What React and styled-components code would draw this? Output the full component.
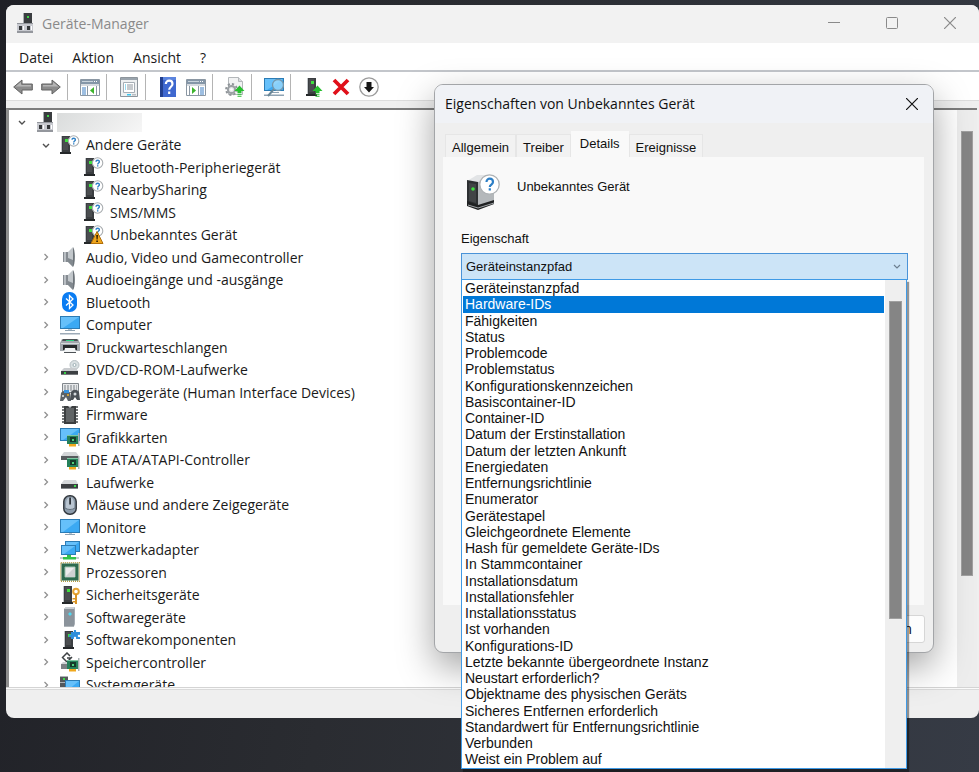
import React, { useState } from "react";
import styled, { createGlobalStyle } from "styled-components";

const properties = [
  "Geräteinstanzpfad",
  "Hardware-IDs",
  "Fähigkeiten",
  "Status",
  "Problemcode",
  "Problemstatus",
  "Konfigurationskennzeichen",
  "Basiscontainer-ID",
  "Container-ID",
  "Datum der Erstinstallation",
  "Datum der letzten Ankunft",
  "Energiedaten",
  "Entfernungsrichtlinie",
  "Enumerator",
  "Gerätestapel",
  "Gleichgeordnete Elemente",
  "Hash für gemeldete Geräte-IDs",
  "In Stammcontainer",
  "Installationsdatum",
  "Installationsfehler",
  "Installationsstatus",
  "Ist vorhanden",
  "Konfigurations-ID",
  "Letzte bekannte übergeordnete Instanz",
  "Neustart erforderlich?",
  "Objektname des physischen Geräts",
  "Sicheres Entfernen erforderlich",
  "Standardwert für Entfernungsrichtlinie",
  "Verbunden",
  "Weist ein Problem auf",
];

const devices = [
  { level: 2, icon: "unknown", open: true, name: "Andere Geräte" },
  { level: 3, icon: "unknown", name: "Bluetooth-Peripheriegerät" },
  { level: 3, icon: "unknown", name: "NearbySharing" },
  { level: 3, icon: "unknown", name: "SMS/MMS" },
  { level: 3, icon: "warning", name: "Unbekanntes Gerät" },
  { level: 2, icon: "speaker", name: "Audio, Video und Gamecontroller" },
  { level: 2, icon: "speaker", name: "Audioeingänge und -ausgänge" },
  { level: 2, icon: "bluetooth", name: "Bluetooth" },
  { level: 2, icon: "computer", name: "Computer" },
  { level: 2, icon: "printer", name: "Druckwarteschlangen" },
  { level: 2, icon: "dvd", name: "DVD/CD-ROM-Laufwerke" },
  { level: 2, icon: "hid", name: "Eingabegeräte (Human Interface Devices)" },
  { level: 2, icon: "firmware", name: "Firmware" },
  { level: 2, icon: "graphics", name: "Grafikkarten" },
  { level: 2, icon: "ide", name: "IDE ATA/ATAPI-Controller" },
  { level: 2, icon: "drive", name: "Laufwerke" },
  { level: 2, icon: "mouse", name: "Mäuse und andere Zeigegeräte" },
  { level: 2, icon: "monitor", name: "Monitore" },
  { level: 2, icon: "network", name: "Netzwerkadapter" },
  { level: 2, icon: "cpu", name: "Prozessoren" },
  { level: 2, icon: "security", name: "Sicherheitsgeräte" },
  { level: 2, icon: "software", name: "Softwaregeräte" },
  { level: 2, icon: "component", name: "Softwarekomponenten" },
  { level: 2, icon: "storage", name: "Speichercontroller" },
  { level: 2, icon: "system", name: "Systemgeräte" },
];

/* shared pieces of the icons */

const Tower = ({ x = 1 }) => (
  <g transform={`translate(${x} 0)`}>
    <path d="M0 1h2v16H0z" fill="#c3c7ca" />
    <path d="M1 1h8v16H1z" fill="#3b3e41" />
    <path d="M2 2h5v13H2z" fill="#4a4d50" />
    <path d="M-1 17h11v2H-1z" fill="#25282a" />
    <path d="M4 4h3v3H4z" fill="#3fe03f" />
  </g>
);

const Question = () => (
  <g>
    <circle cx="13.6" cy="6" r="5.2" fill="#fff" stroke="#a9adb0" strokeWidth="1.1" />
    <path
      d="M12 4.7c0-2 3.400-2 3.400 0 0 1.300-1.700 1.300-1.700 2.700M13.700 8.300v1.100"
      fill="none"
      stroke="#2d7fc6"
      strokeWidth="1.4"
    />
  </g>
);

const Screen = ({ x = 0, y = 0, w = 20, h = 13 }) => (
  <g>
    <rect x={x} y={y} width={w} height={h} fill="#2c7cb5" />
    <rect x={x + 1} y={y + 1} width={w - 2} height={h - 2} fill="#3ba9f3" />
    <path d={`M${x + 1} ${y + 1}h${w - 2}L${x + 3} ${y + h - 1}h-2z`} fill="#66c0fa" />
  </g>
);

const Board = () => (
  <g>
    <path d="M7 8h11v9H7z" fill="#25805a" />
    <path d="M7 8h11v1H7z" fill="#7fc6a2" />
    <path d="M10 10h6v5h-6z" fill="#17392c" />
    <path d="M12 12h2v2h-2z" fill="#4fcf7c" />
    <path d="M18 6h1.500v13H18z" fill="#aab2b5" />
    <path d="M9 17h7v2.500H9z" fill="#f0a81d" />
  </g>
);

const UpArrow = () => (
  <g fill="#27bf2f">
    <path d="M14.500 8.500 19.500 14h-3v2h-4v-2h-3z" />
    <path d="M12.500 16.800h4v1h-4zM12.500 18.700h4v1h-4z" />
  </g>
);

const WindowFrame = ({ children }) => (
  <g>
    <path d="M.5 2.500h19v16H.5z" fill="#fff" stroke="#8b97a3" />
    <path d="M1 3h18v4H1z" fill="#8496a8" />
    <path d="M2 4h11v1H2z" fill="#c8d3dc" />
    <path d="M14 4h1v1h-1zM16 4h1v1h-1z" fill="#fff" />
    <path d="M1 7h18v2H1z" fill="#d5dadf" />
    {children}
  </g>
);

const icons = {
  root: (
    <g>
      <path d="M8 0h8v10H8z" fill="#3a3d40" />
      <path d="M7 0h1v10H7z" fill="#a8acb0" />
      <path d="M11 3h2v2h-2z" fill="#3fd447" />
      <path d="M1 10h16v10H1z" fill="#c7c9cf" />
      <path d="M1 10h16v1H1zM1 18h16v2H1z" fill="#94979d" />
      <path d="M3 13h3v4H3zM11 13h3v4h-3z" fill="#34373a" />
      <path d="M7 13h1v4H7zM15 13h1v4h-1z" fill="#fff" />
    </g>
  ),
  unknown: (
    <g>
      <Tower />
      <Question />
    </g>
  ),
  warning: (
    <g>
      <Tower />
      <Question />
      <path d="M13 6.500 19 18.500H7z" fill="#efa51c" stroke="#b06f0b" />
      <path d="M12.200 10h1.800l-.4 4.500h-1zM12.300 15.500h1.600V17h-1.600z" fill="#2c1c00" />
    </g>
  ),
  speaker: (
    <g>
      <path d="M3 5h5v10H3z" fill="#858b91" />
      <path d="M4 5h2v10H4z" fill="#b9bec3" />
      <path d="M8 5 13 0v20l-5-5z" fill="#c2c7cb" />
      <path d="M8 11 13 13v7l-5-5z" fill="#82898f" />
      <path d="M13 0c2.500 3 2.500 17 0 20z" fill="#6d747a" />
    </g>
  ),
  bluetooth: (
    <g>
      <rect x="2" y="0" width="15" height="20" rx="7" fill="#0a7cf2" />
      <path d="m6 6.500 7 6.500-3.500 3.500v-13L13 7l-7 6.500" fill="none" stroke="#fff" strokeWidth="1.300" />
    </g>
  ),
  computer: (
    <g>
      <Screen y={1} />
      <path d="M8 14h4v1H8z" fill="#b9c6d0" />
      <path d="M5 15h10v1H5z" fill="#8fa3b3" />
      <path d="M0 18h20v1.500H0z" fill="#9dabb8" />
    </g>
  ),
  monitor: (
    <g>
      <Screen y={2} h={14} />
      <path d="M9 16h3v1H9z" fill="#b9c6d0" />
      <path d="M5 17h10v1H5z" fill="#8fa3b3" />
    </g>
  ),
  printer: (
    <g>
      <path d="M2 2h16l2 4v8H0V6z" fill="#a1a7ac" />
      <path d="M3 2h14l1 2H2z" fill="#4d5256" />
      <path d="M6 3h8v1H6z" fill="#2bd07f" />
      <path d="M1 6h18v1H1z" fill="#d5d9dc" />
      <path d="M3 8h14v5H3z" fill="#26292b" />
      <path d="M5 11h10l1 4H4z" fill="#f2f4f5" />
      <path d="M4 15h12v1H4z" fill="#4d5256" />
    </g>
  ),
  dvd: (
    <g>
      <circle cx="14.500" cy="5" r="4.500" fill="#d9e0e2" stroke="#b7c0c4" />
      <circle cx="14.500" cy="5" r="1.500" fill="#fff" stroke="#9fb0b5" />
      <path d="M4 8h12l2 3H1z" fill="#c9cccf" />
      <path d="M1 11h17v4H1z" fill="#3c3f42" />
      <path d="M4 12h2v2H4z" fill="#38cf49" />
      <path d="M1 14h17v1H1z" fill="#75797c" />
    </g>
  ),
  hid: (
    <g>
      <path d="M2.500 1.500h16v9h-16z" fill="#e6e8ea" stroke="#81878c" />
      <path d="M4 4h13M4 6h13M4 8h13" stroke="#7b8186" strokeDasharray="2 1" />
      <path d="M1 11c2-3 7-3 9 0l1 8H8l-2-4-3 4H0z" fill="#5b6268" />
      <path d="M11 10c2-3 6-3 8 0l1 8h-3l-2-3-2 3h-3z" fill="#4a5056" />
      <path d="M4 8h5v3H4z" fill="#3793e0" />
      <circle cx="8" cy="13" r="1" fill="#f0b429" />
      <circle cx="3" cy="14" r="1" fill="#e8ecef" />
      <circle cx="15" cy="12" r="1.500" fill="#d5dade" />
    </g>
  ),
  firmware: (
    <g>
      <path d="M2 2h16M2 5h16M2 8h16M2 11h16M2 14h16M2 17h16" stroke="#44494c" strokeWidth="1.600" />
      <path d="M4 1h12v18H4z" fill="#3b3e40" />
      <path d="M6 3h8v14H6z" fill="#606466" />
      <path d="M8 1h4l-2 2z" fill="#cfd2d4" />
    </g>
  ),
  graphics: (
    <g>
      <Screen y={1} />
      <Board />
    </g>
  ),
  ide: (
    <g>
      <path d="M4 2h12l3 4H1z" fill="#d2d5d7" />
      <path d="M1 6h18v4H1z" fill="#575b5e" />
      <Board />
    </g>
  ),
  drive: (
    <g>
      <path d="M4 8h12l2 4H1z" fill="#d5d8da" />
      <path d="M1 12h17v5H1z" fill="#3c3f42" />
      <path d="M14 13h2v2h-2z" fill="#3bdc49" />
      <path d="M1 16h17v1H1z" fill="#85898c" />
    </g>
  ),
  mouse: (
    <g>
      <rect x="3.800" y=".8" width="12.400" height="18.400" rx="5.800" fill="#8d9cab" stroke="#33383e" strokeWidth="1.500" />
      <path d="M6 9c0-9 8-9 8 0v4c-2 2-6 2-8 0z" fill="#b9c5d1" />
      <path d="M9.200 2.500h1.800v7H9.200z" fill="#30363d" />
      <path d="M5 13c3 2 7 2 10 0" fill="none" stroke="#65717c" />
    </g>
  ),
  network: (
    <g>
      <Screen x={5} y={1} w={15} h={11} />
      <Screen x={1} y={5} w={15} h={10} />
      <path d="M7 15h4v2h5v2.500H3V17h4z" fill="#32c24b" />
      <path d="M0 17h3v2H0zM16 17h3v2h-3z" fill="#c6ccd0" />
    </g>
  ),
  cpu: (
    <g>
      <path d="M.8.8h18.400v18.400H.8z" fill="none" stroke="#b49b45" strokeWidth="1.500" strokeDasharray="1 1" />
      <path d="M1.500 1.500h17v17h-17z" fill="#2d6b4e" />
      <path d="M5 5h10v10H5z" fill="#ececec" stroke="#9ec2ae" />
      <path d="M15 5v10H5z" fill="#cfd2d2" />
    </g>
  ),
  security: (
    <g>
      <Tower x={3} />
      <circle cx="16" cy="6.500" r="2.800" fill="none" stroke="#e5a435" strokeWidth="2" />
      <path d="M15 9h2v10h-2zM12.500 13H15v1.500h-2.500zM12.500 16H15v1.500h-2.500z" fill="#d99425" />
    </g>
  ),
  software: (
    <g>
      <path d="M4 2 6 0h9v17l-1 2.500H4z" fill="#a4abb2" />
      <path d="M4 2h10v17.500H4z" fill="#8b939b" />
      <path d="M4 2 6 0h9l-1 2z" fill="#c8cdd2" />
      <path d="M10 5 12 7l-2 2-2-2z" fill="#4fd8f2" />
    </g>
  ),
  component: (
    <g>
      <Tower x={4} />
      <path d="M11 2h3c-1-3 3-3 2 0h4v3c-3-1-3 3 0 2v2h-4c1-3-3-3-2 0h-3V7c-3 1-3-3 0-2z" fill="#2d8edb" />
    </g>
  ),
  storage: (
    <g>
      <path d="m2 6 5-5 3 3M3 6l4 4 5-5M7 6h4" fill="none" stroke="#3d4144" strokeWidth="1.500" />
      <path d="M1 12h9v5H1z" fill="#7c8184" />
      <path d="M3 10h8l-2 2H1z" fill="#cfd3d5" />
      <Board />
    </g>
  ),
  system: (
    <g>
      <path d="M0 1h8v17H0z" fill="#54585b" />
      <path d="M0 1h8v1H0zM0 7h6v1H0z" fill="#aeb3b6" />
      <path d="M3 3h2v2H3z" fill="#3fdc49" />
      <Screen x={5} y={5} w={15} h={11} />
    </g>
  ),
  back: (
    <g>
      <path
        d="M.7 10 9 3v4h10.300v6H9v4z"
        fill="#8c8c8c"
        stroke="#626262"
        strokeLinejoin="round"
      />
      <path d="M2.500 9.500 8 5v3h10v1.500z" fill="#b5b5b5" />
    </g>
  ),
  forward: (
    <g>
      <path
        d="M19.300 10 11 3v4H.7v6H11v4z"
        fill="#8c8c8c"
        stroke="#626262"
        strokeLinejoin="round"
      />
      <path d="M17.500 9.500 12 5v3H2v1.500z" fill="#b5b5b5" />
    </g>
  ),
  showTree: (
    <WindowFrame>
      <path d="M2 11h4M2 13h4M2 15h4M2 17h4" stroke="#3c7fc4" />
      <path d="M7.500 9v9M16.500 9v9" stroke="#8b97a3" />
      <path d="M14 10v7l-4-3.500z" fill="#3cb42c" />
    </WindowFrame>
  ),
  properties: (
    <g>
      <path d="M1.500.5h17v19h-17z" fill="#eef0f1" stroke="#8d959c" />
      <path d="M2 1h16v2H2z" fill="#9aa4ad" />
      <path d="M4.500 5.500h11v10h-11z" fill="#fff" stroke="#a6aeb5" />
      <path d="M6 8h1M6 10h1M6 12h1" stroke="#35b8e0" />
      <path d="M8 8h6M8 10h6M8 12h6" stroke="#8d959c" />
      <path d="M8 17h4v1.500H8z" fill="#3bc4ee" />
      <path d="M13 17h4v1.500h-4z" fill="#b8bec4" />
    </g>
  ),
  help: (
    <g>
      <path d="M2 0h16v20H2z" fill="#3f68cf" />
      <path d="M2 0h3v20H2z" fill="#23408f" />
      <path d="M5 0h13v3H5z" fill="#5b84de" />
      <path d="M7.800 7c0-4.500 6.700-4.500 6.700 0 0 2.700-3.300 2.800-3.300 5.800M11.200 14.500V17" fill="none" stroke="#fff" strokeWidth="2.200" />
    </g>
  ),
  action: (
    <WindowFrame>
      <path d="M14 11h4M14 13h4M14 15h4M14 17h4" stroke="#3c7fc4" />
      <path d="M12.500 9v9M3.500 9v9" stroke="#8b97a3" />
      <path d="M6 10v7l4-3.500z" fill="#3cb42c" />
    </WindowFrame>
  ),
  update: (
    <g>
      <path d="M3.500.5h10l4 4v13h-14z" fill="#f1f2f3" stroke="#b3b7ba" />
      <path d="M13.500.5v4h4" fill="#dadddf" stroke="#b3b7ba" />
      <circle cx="6.500" cy="12.500" r="5.400" fill="none" stroke="#8f9498" strokeWidth="2" strokeDasharray="2.200 2" />
      <circle cx="6.500" cy="12.500" r="3.600" fill="#e1e3e5" stroke="#9a9fa3" strokeWidth="2" />
      <circle cx="6.500" cy="12.500" r="1.300" fill="#fff" />
      <UpArrow />
    </g>
  ),
  scan: (
    <g>
      <Screen y={1} />
      <path d="M6 15h9v1H6zM0 17.500h20V19H0z" fill="#8fa3b3" />
      <path d="m10 12-6 7" stroke="#6b8797" strokeWidth="2" />
      <circle cx="14" cy="8" r="5.500" fill="#9bd8fb" fillOpacity=".8" stroke="#7496aa" strokeWidth="1.300" />
    </g>
  ),
  enable: (
    <g>
      <Tower x={4} />
      <UpArrow />
    </g>
  ),
  remove: <path d="m3 3 14 14M17 3 3 17" stroke="#e0101a" strokeWidth="3.800" />,
  disable: (
    <g>
      <circle cx="10" cy="10" r="9.200" fill="#fdfdfd" stroke="#9b9b9b" strokeWidth="1.300" />
      <path d="M7.500 5h5v5H15l-5 5.500L5 10h2.500z" fill="#151515" />
    </g>
  ),
  chevronDown: <path d="m7 9 3 3 3-3" fill="none" stroke="#505050" strokeWidth="1.400" />,
  chevronRight: <path d="m8.500 7 3 3-3 3" fill="none" stroke="#909090" strokeWidth="1.300" />,
};

const Icon = ({ name }) => (
  <svg width="20" height="20" viewBox="0 0 20 20" aria-hidden="true">
    {icons[name]}
  </svg>
);

const toolGroups = [
  [["back", "Zurück"], ["forward", "Vorwärts"]],
  [["showTree", "Konsolenstruktur"]],
  [["properties", "Eigenschaften"]],
  [["help", "Hilfe"], ["action", "Aktionsbereich"]],
  [["update", "Treiber aktualisieren"]],
  [["scan", "Nach geänderter Hardware suchen"]],
  [["enable", "Gerät aktivieren"], ["remove", "Gerät deinstallieren"], ["disable", "Gerät deaktivieren"]],
];

const CloseGlyph = () => (
  <svg width="12" height="12" viewBox="0 0 12 12" aria-hidden="true">
    <path d="M0 0l12 12M12 0L0 12" stroke="currentColor" strokeWidth="1.200" />
  </svg>
);

function DeviceManager() {
  return (
    <MainWindow>
      <TitleBar>
        <Icon name="root" />
        <h1>Geräte-Manager</h1>
        <CaptionButton aria-label="Minimieren">
          <svg width="12" height="12" viewBox="0 0 12 12">
            <path d="M0 5.500h12" stroke="currentColor" />
          </svg>
        </CaptionButton>
        <CaptionButton aria-label="Maximieren">
          <svg width="12" height="12" viewBox="0 0 12 12">
            <rect x=".5" y=".5" width="11" height="11" rx="1" fill="none" stroke="currentColor" />
          </svg>
        </CaptionButton>
        <CaptionButton aria-label="Schließen">
          <CloseGlyph />
        </CaptionButton>
      </TitleBar>
      <MenuBar>
        {["Datei", "Aktion", "Ansicht", "?"].map((item) => (
          <button key={item}>{item}</button>
        ))}
      </MenuBar>
      <ToolBar>
        {toolGroups.map((group) => (
          <ToolGroup key={group[0][0]}>
            {group.map(([icon, label]) => (
              <button key={icon} aria-label={label}>
                <Icon name={icon} />
              </button>
            ))}
          </ToolGroup>
        ))}
      </ToolBar>
      <Pane>
        <Tree role="tree">
          <TreeItem role="treeitem" $level={1}>
            <Twisty>
              <Icon name="chevronDown" />
            </Twisty>
            <Icon name="root" />
            <HostName />
          </TreeItem>
          {devices.map((item) => (
            <TreeItem key={item.name} role="treeitem" aria-level={item.level} $level={item.level}>
              <Twisty>
                {item.level === 2 && <Icon name={item.open ? "chevronDown" : "chevronRight"} />}
              </Twisty>
              <Icon name={item.icon} />
              <span>{item.name}</span>
            </TreeItem>
          ))}
        </Tree>
        <PaneScroll>
          <Thumb $size="80%" />
        </PaneScroll>
      </Pane>
      <StatusBar />
    </MainWindow>
  );
}

function PropertiesDialog() {
  const [value, setValue] = useState(properties[0]);
  const [active, setActive] = useState(properties[1]);

  return (
    <Dialog role="dialog" aria-labelledby="dialogTitle">
      <DialogTitle>
        <h2 id="dialogTitle">Eigenschaften von Unbekanntes Gerät</h2>
        <DialogClose aria-label="Schließen">
          <CloseGlyph />
        </DialogClose>
      </DialogTitle>
      <Tabs role="tablist">
        {["Allgemein", "Treiber", "Details", "Ereignisse"].map((tab) => (
          <Tab key={tab} role="tab" aria-selected={tab === "Details"} $active={tab === "Details"}>
            {tab}
          </Tab>
        ))}
      </Tabs>
      <Page role="tabpanel">
        <DeviceHead>
          <svg width="36" height="38" viewBox="0 0 36 38" aria-hidden="true">
            <path d="M2 8 12 2h17v24l-16 6z" fill="#e2e4e6" />
            <path d="M13 9 29 6v23l-16 5z" fill="#b4b8bb" />
            <path d="M2 7l11 2v24L2 30z" fill="#2d3032" />
            <path d="M4 10l7 1v19l-7-2z" fill="#414446" />
            <path d="M2 28l11 4 16-5v4l-16 6-11-4z" fill="#1f2122" />
            <path d="M3 32l10 3 16-5" fill="none" stroke="#a1a5a8" />
            <circle cx="8" cy="16" r="1.800" fill="#3fe03f" />
            <circle cx="24.500" cy="11.500" r="9.700" fill="#fff" stroke="#adb1b4" strokeWidth="1.300" />
            <path
              d="M21.500 9c0-4.500 6.500-4.300 6.500 0 0 2.600-3.200 2.600-3.200 5M24.800 15.300v2.200"
              fill="none"
              stroke="#2d7fc6"
              strokeWidth="2.200"
            />
          </svg>
          <span>Unbekanntes Gerät</span>
        </DeviceHead>
        <label htmlFor="property">Eigenschaft</label>
        <Combo>
          <select id="property" value={value} onChange={(e) => setValue(e.target.value)}>
            {properties.map((item) => (
              <option key={item}>{item}</option>
            ))}
          </select>
          <svg width="8" height="6" viewBox="0 0 8 6" aria-hidden="true">
            <path d="M1 1l3 3 3-3" fill="none" stroke="#6d7f90" strokeWidth="1.200" />
          </svg>
          <DropDown>
            <Options role="listbox" aria-label="Eigenschaft">
              {properties.map((item) => (
                <Option
                  key={item}
                  role="option"
                  aria-selected={item === active}
                  $active={item === active}
                  onMouseEnter={() => setActive(item)}
                  onClick={() => setValue(item)}
                >
                  {item}
                </Option>
              ))}
            </Options>
            <ListScroll>
              <Thumb $size="68%" />
            </ListScroll>
          </DropDown>
        </Combo>
      </Page>
      <DialogFooter>
        <button>Abbrechen</button>
      </DialogFooter>
    </Dialog>
  );
}

export default function App() {
  return (
    <Desktop>
      <GlobalStyle />
      <DeviceManager />
      <PropertiesDialog />
    </Desktop>
  );
}

const GlobalStyle = createGlobalStyle`
  * {
    box-sizing: border-box;
  }
  body {
    margin: 0;
    overflow: hidden;
    color: #1a1a1a;
    font-family: "Open Sans", "Noto Sans", sans-serif;
    font-size: 14px;
  }
  h1, h2, ul {
    margin: 0;
    padding: 0;
    font-size: 14px;
    font-weight: 400;
    list-style: none;
  }
  button, select {
    padding: 0;
    border: none;
    background: transparent;
    color: inherit;
    font: inherit;
  }
  svg {
    display: block;
    flex: none;
  }
`;

const Desktop = styled.main`
  position: relative;
  height: 100vh;
  padding: 5px 0 54px 6px;
  overflow: hidden;
  background: linear-gradient(100deg, #1f2026 0%, #2a2c31 40%, #363b45 100%);
`;

const MainWindow = styled.section`
  display: flex;
  flex-direction: column;
  height: 100%;
  overflow: hidden;
  border-radius: 8px;
  background: #efefef;
`;

const TitleBar = styled.header`
  display: flex;
  align-items: center;
  flex: none;
  height: 38px;
  padding: 0 0 2px 10px;
  background: #f2f2f2;
  color: #8a8a8a;
  h1 {
    flex: 1;
    margin-left: 6px;
  }
`;

const CaptionButton = styled.button`
  display: grid;
  place-items: center;
  width: 58px;
  height: 36px;
`;

const MenuBar = styled.nav`
  display: flex;
  align-items: center;
  flex: none;
  gap: 19px;
  height: 29px;
  padding: 2px 0 0 13px;
  border-bottom: 2px solid #c3c6cb;
  background: #fff;
`;

const ToolBar = styled.div`
  display: flex;
  align-items: center;
  flex: none;
  height: 29px;
  padding-top: 2px;
  border-bottom: 1px solid #dcdcdc;
  background: #fff;
`;

const ToolGroup = styled.div`
  display: flex;
  align-items: center;
  gap: 8px;
  height: 26px;
  padding: 0 6px 0 12px;
  border-right: 1px solid #b4b4b4;
  &:first-child {
    padding-left: 7px;
  }
  &:last-child {
    border-right: none;
  }
`;

const Pane = styled.div`
  display: flex;
  flex: 1;
  min-height: 0;
  margin: 7px 2px 0 0;
  border-top: 2px solid #7c7c7c;
  border-left: 3px solid #8e8e8e;
  background: #fff;
`;

const Tree = styled.ul`
  flex: 1;
  padding-top: 1px;
  overflow: hidden;
`;

const TreeItem = styled.li`
  display: flex;
  align-items: center;
  height: 22px;
  padding-left: ${({ $level }) => $level * 24 - 23}px;
  white-space: nowrap;
  &:nth-child(even) {
    height: 23px;
  }
  span {
    margin-left: 6px;
  }
`;

const Twisty = styled.div`
  display: flex;
  justify-content: center;
  width: 24px;
  margin-right: 2px;
`;

const HostName = styled.div`
  width: 85px;
  height: 19px;
  margin-left: 1px;
  background: linear-gradient(135deg, #dadcdc, #f6f6f6);
`;

const PaneScroll = styled.div`
  width: 20px;
  padding: 21px 4px 0;
  background: #ededed;
`;

const Thumb = styled.div`
  height: ${({ $size }) => $size};
  border: 1px solid #a0a0a0;
  background: #858585;
`;

const StatusBar = styled.footer`
  flex: none;
  height: 31px;
  border-top: 1px solid #d4d4d4;
  box-shadow: inset 0 1px #fafafa, inset 0 2px #dadada;
`;

const Dialog = styled.section`
  position: absolute;
  top: 84px;
  left: 434px;
  right: 45px;
  border: 1px solid #a3a5a8;
  border-radius: 9px;
  background: #efefef;
  box-shadow: 0 14px 36px rgba(0, 0, 0, 0.36);
  color: #111;
  font-family: "Liberation Sans", Arial, sans-serif;
  font-size: 13px;
`;

const DialogTitle = styled.header`
  display: flex;
  align-items: center;
  height: 38px;
  padding: 0 0 1px 10px;
  border-radius: 8px 8px 0 0;
  background: #f0f2f6;
  h2 {
    flex: 1;
    font-family: "Open Sans", "Noto Sans", sans-serif;
  }
`;

const DialogClose = styled.button`
  display: grid;
  place-items: center;
  width: 42px;
  height: 37px;
`;

const Tabs = styled.div`
  display: flex;
  align-items: flex-end;
  height: 34px;
  padding-left: 10px;
`;

const Tab = styled.button`
  height: ${({ $active }) => ($active ? 26 : 23)}px;
  padding: ${({ $active }) => ($active ? "0 8px 2px" : "2px 6px 0")};
  border: 1px solid ${({ $active }) => ($active ? "#f9f9f9" : "#e6e6e6")};
  border-bottom: none;
  background: ${({ $active }) => ($active ? "#f9f9f9" : "#f2f2f2")};
`;

const Page = styled.div`
  height: 448px;
  margin: 0 9px 0 8px;
  padding: 16px 16px 0 18px;
  background: #f9f9f9;
  label {
    display: block;
    margin: 19px 0 5px;
    line-height: 18px;
  }
`;

const DeviceHead = styled.div`
  display: flex;
  align-items: flex-start;
  gap: 16px;
  padding-left: 4px;
  span {
    margin-top: 5px;
    line-height: 18px;
  }
`;

const Combo = styled.div`
  position: relative;
  select {
    display: block;
    width: 100%;
    height: 27px;
    padding: 0 4px;
    border: 1px solid #4a93d8;
    background: #cce4f7;
    appearance: none;
  }
  > svg {
    position: absolute;
    top: 11px;
    right: 7px;
    pointer-events: none;
  }
`;

const DropDown = styled.div`
  position: absolute;
  top: 26px;
  left: 0;
  right: 1px;
  display: flex;
  border: 1px solid #3f9ae6;
  background: #fff;
  box-shadow: 2px 3px 1px rgba(0, 0, 0, 0.4);
  font-size: 14px;
`;

const Options = styled.ul`
  flex: 1;
  padding: 0 1px;
`;

const Option = styled.li`
  height: 16px;
  padding-left: 2px;
  background: ${({ $active }) => ($active ? "#0078d7" : "transparent")};
  color: ${({ $active }) => ($active ? "#fff" : "inherit")};
  line-height: 16px;
  white-space: nowrap;
  &:nth-child(4n + 2) {
    height: 17px;
  }
`;

const ListScroll = styled.div`
  width: 21px;
  padding: 21px 4px 0;
  background: #efefef;
`;

const DialogFooter = styled.footer`
  display: flex;
  justify-content: flex-end;
  padding: 10px 8px 9px;
  button {
    width: 94px;
    height: 28px;
    border: 1px solid #d6d6d6;
    border-radius: 3px;
    background: #fdfdfd;
    font-size: 14px;
  }
`;
